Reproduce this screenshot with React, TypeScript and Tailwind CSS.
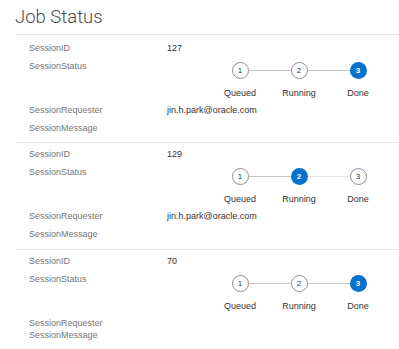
const SESSIONS = [
  { id: "127", current: 3, requester: "jin.h.park@oracle.com" },
  { id: "129", current: 2, requester: "jin.h.park@oracle.com" },
  { id: "70", current: 3, requester: "" },
];

const STEPS = ["Queued", "Running", "Done"];

export default function App() {
  return (
    <div className="w-[399px] h-[349px] overflow-hidden bg-white font-['Liberation_Sans',Arial,sans-serif]">
      <h1 className="pl-[15px] pt-[6px] pb-[6px] text-[18.5px] leading-[22px] font-light text-[#4a4a4a] font-['Roboto',Arial,sans-serif]">
        Job Status
      </h1>
      <div className="ml-[15px] border-t border-[#e6e6e6]">
        {SESSIONS.map((s, i) => (
          <SessionBlock key={s.id} first={i === 0} {...s} />
        ))}
        <div className="h-[3px] bg-[#f0f0f0]" />
      </div>
    </div>
  );
}

function SessionBlock({
  id,
  current,
  requester,
  first,
}: {
  id: string;
  current: number;
  requester: string;
  first: boolean;
}) {
  return (
    <div
      className={
        first
          ? "pl-[14px] pt-[7px] pb-[8px] border-b border-[#e6e6e6] text-[9px] leading-[12px]"
          : "pl-[14px] pt-[5px] pb-[9px] border-b border-[#e6e6e6] last-of-type:border-b-0 text-[9px] leading-[12px]"
      }
    >
      <Row label="SessionID" value={id} />
      <div className="flex h-[44px]">
        <div className="w-[138px] text-[#777]">SessionStatus</div>
        <Stepper current={current} />
      </div>
      <Row label="SessionRequester" value={requester} />
      <Row label="SessionMessage" value="" />
    </div>
  );
}

function Row({ label, value }: { label: string; value: string }) {
  return (
    <div className={value ? "flex h-[18px]" : "flex h-[12px]"}>
      <div className="w-[138px] text-[#777]">{label}</div>
      <div className="text-[#333]">{value}</div>
    </div>
  );
}

function Stepper({ current }: { current: number }) {
  return (
    <div className="ml-[43.5px] pt-[2px] w-[177px]">
      <div className="flex items-center pl-[21px]">
        {STEPS.map((step, i) => (
          <div key={step} className="flex items-center">
            {i > 0 && (
              <div
                className={
                  i < current
                    ? "w-[42px] h-px bg-[#c4c4c4]"
                    : "w-[42px] h-px bg-[#e4e4e4]"
                }
              />
            )}
            {i + 1 === current ? (
              <div className="w-[17px] h-[17px] rounded-full bg-[#0572ce] text-white text-[8px] font-bold flex items-center justify-center">
                {i + 1}
              </div>
            ) : (
              <div className="w-[17px] h-[17px] rounded-full border-[1.5px] border-[#8e8e8e] bg-white text-[#333] text-[8px] flex items-center justify-center">
                {i + 1}
              </div>
            )}
          </div>
        ))}
      </div>
      <div className="flex mt-[8px]">
        {STEPS.map((step) => (
          <div key={step} className="w-[59px] text-center text-[#333]">
            {step}
          </div>
        ))}
      </div>
    </div>
  );
}
